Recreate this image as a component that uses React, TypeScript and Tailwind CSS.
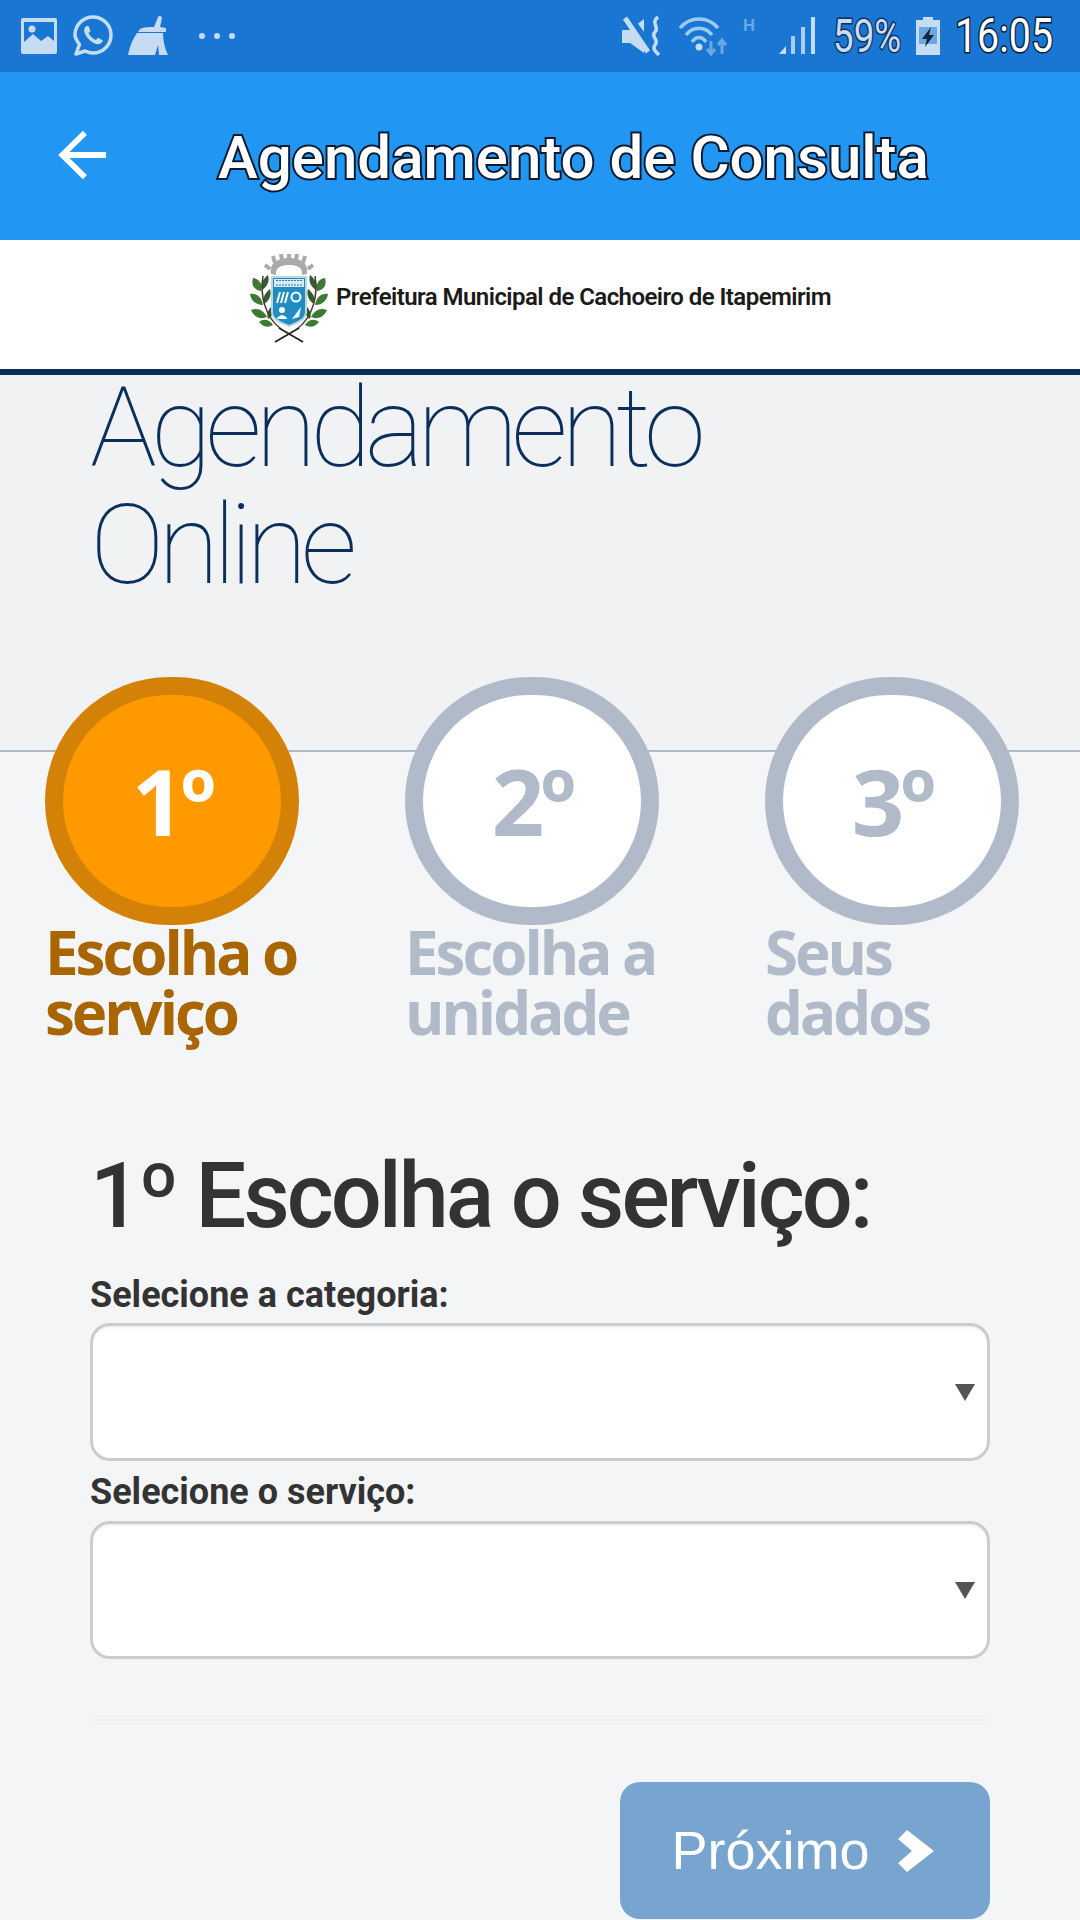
import React from "react";

const steps = [
  { n: "1º", label: ["Escolha o", "serviço"], active: true },
  { n: "2º", label: ["Escolha a", "unidade"], active: false },
  { n: "3º", label: ["Seus", "dados"], active: false },
];

const PictureIcon = () => (
  <svg width="36" height="36" viewBox="0 0 36 36">
    <rect x="0" y="0" width="36" height="36" rx="2" fill="#c6dcf3" />
    <rect x="3" y="4" width="30" height="26" fill="#1976d2" />
    <path d="M3 32V24L12 16L20 23L27 18L33 23V32Z" fill="#c6dcf3" />
    <circle cx="11" cy="11" r="3.500" fill="#c6dcf3" />
  </svg>
);

const WhatsappIcon = () => (
  <svg width="40" height="42" viewBox="0 0 40 42" fill="none">
    <path d="M3 39L6.500 29.500C4.500 26.500 2 23.500 2 20C2 10 10 2 20 2C30 2 38 10 38 20C38 30 30 38 20 38C17 38 14.500 37.200 12 36Z" stroke="#c6dcf3" strokeWidth="3.500" strokeLinejoin="round" />
    <path d="M13 11C11 13 10.500 16 12 19C14.500 24 18.500 27.500 23 29C26.500 30 29 28 30 25.500L25 22.800L23 25C20 24 17 21 15.500 18L17.500 16L15.500 11Z" fill="#c6dcf3" />
  </svg>
);

const BroomIcon = () => (
  <svg width="42" height="42" viewBox="0 0 42 42">
    <path d="M27 12L31 2C32 0 35 1 35 3L33 12L39 13L39 17L11 17L13 14C17 12 22 12 27 12Z" fill="#c6dcf3" />
    <path d="M10 18H36C36 26 38 34 41 40L32 40L31 30L28 40H1C3 30 6 24 10 18Z" fill="#c6dcf3" />
  </svg>
);

const MuteIcon = () => (
  <svg width="42" height="42" viewBox="0 0 42 42" fill="none">
    <path d="M0 15H8L22 4V38L8 28H0Z" fill="#c6dcf3" />
    <path d="M4 0L29 34" stroke="#1976d2" strokeWidth="9" />
    <path d="M3 3L26 37" stroke="#c6dcf3" strokeWidth="5" />
    <path d="M36 2C28 8 38 12 33 17C28 22 38 25 33 30C30 34 34 37 37 40" stroke="#c6dcf3" strokeWidth="3.500" />
  </svg>
);

const WifiIcon = () => (
  <svg width="50" height="42" viewBox="0 0 50 42" fill="none">
    <path d="M2 13C12 1 30 1 40 13" stroke="#9ccaf2" strokeWidth="3.500" />
    <path d="M8 20C15 11 27 11 34 20" stroke="#9ccaf2" strokeWidth="3.500" />
    <path d="M14 27C18 21 24 21 28 27" stroke="#9ccaf2" strokeWidth="3.500" />
    <circle cx="21" cy="32" r="3.500" fill="#c6dcf3" />
    <path d="M33 26V39M29 34L33 39L37 34" stroke="#6ba6e6" strokeWidth="3" />
    <path d="M44 39V26M40 30L44 25L48 30" stroke="#6ba6e6" strokeWidth="3" />
  </svg>
);

const SignalIcon = () => (
  <svg width="36" height="38" viewBox="0 0 36 38">
    <path d="M0 37L7 29V37Z" fill="#c6dcf3" />
    <rect x="12" y="19" width="4" height="18" fill="#a9cdf0" />
    <rect x="22" y="10" width="4" height="27" fill="#a9cdf0" />
    <rect x="32" y="0" width="4" height="37" fill="#c6dcf3" />
  </svg>
);

const BatteryIcon = () => (
  <svg width="24" height="38" viewBox="0 0 24 38">
    <path d="M7 0H17V3H24V38H0V3H7Z" fill="#c6dcf3" />
    <rect x="3" y="10" width="18" height="17" fill="#6ba6e6" />
    <path d="M15 10L6 22H11L9 30L18 18H13Z" fill="#13233a" />
  </svg>
);

// folhas do brasao, lado esquerdo; o direito e espelhado
const WreathSide = () => (
  <g>
    <path d="M4 24C11 25 14 31 12 37C5 36 2 31 4 24Z" fill="#3d7a36" />
    <path d="M19 21C21 27 18 33 13 36C11 30 14 25 19 21Z" fill="#2c5f2b" />
    <path d="M1 40C8 39 13 44 14 51C6 51 2 46 1 40Z" fill="#3d7a36" />
    <path d="M21 35C23 41 20 47 15 50C13 44 16 39 21 35Z" fill="#2c5f2b" />
    <path d="M2 56C9 53 15 57 18 63C11 66 5 63 2 56Z" fill="#3d7a36" />
    <path d="M25 50C26 56 24 62 19 65C17 59 20 54 25 50Z" fill="#2c5f2b" />
    <path d="M10 68C15 64 21 66 24 71C19 74 14 73 10 68Z" fill="#3d7a36" />
    <path d="M14 22C11 40 15 62 32 75" fill="none" stroke="#54352a" strokeWidth="1.500" />
  </g>
);

const Crest = () => (
  <svg width="80" height="90" viewBox="0 0 80 90" fill="none">
    <path d="M22 20C20 8 30 4 40 4C50 4 60 8 58 20L53 21C54 13 47 11 40 11C33 11 26 13 27 21Z" fill="#a8aaab" />
    <path d="M26 9L24 2M33 6L32 0M40 5V0M47 6L48 0M54 9L56 2M21 15L16 11M59 15L64 11" stroke="#a8aaab" strokeWidth="4" />
    <WreathSide />
    <g transform="matrix(-1 0 0 1 80 0)">
      <WreathSide />
    </g>
    <path d="M30 74L54 88M50 74L26 88" stroke="#2d2420" strokeWidth="2" />
    <path d="M23 23H57V58C57 66 47 69 40 72C33 69 23 66 23 58Z" fill="#1f8cc2" stroke="#bcd6e2" strokeWidth="2" />
    <rect x="25" y="25" width="30" height="8" fill="#dbe9ef" />
    <path d="M27 26.500H53M27 31H53" stroke="#2c7fa6" strokeWidth="1" strokeDasharray="2 1" />
    <path d="M31 38L28 49M35 38L32 49M39 38L36 49" stroke="#fff" strokeWidth="2" />
    <circle cx="47" cy="43" r="4.500" stroke="#fff" strokeWidth="2" />
    <circle cx="33" cy="56" r="3" fill="#fff" />
    <path d="M28 65C29 60 37 60 38 65Z" fill="#fff" />
    <path d="M43 65L52 53L50 63Z" fill="#fff" />
  </svg>
);

const Step = ({ n, label, active }: { n: string; label: string[]; active: boolean }) => (
  <div className="flex w-[254px] flex-col">
    <div
      className={
        active
          ? "flex h-[248px] w-[254px] items-center justify-center rounded-full border-[18px] border-[#d48207] bg-[#ff9900]"
          : "flex h-[248px] w-[254px] items-center justify-center rounded-full border-[18px] border-[#b0bac8] bg-white"
      }
    >
      <span
        className={
          active
            ? "font-['Open_Sans',sans-serif] text-[92px] leading-none font-bold tracking-[-4px] text-white"
            : "font-['Open_Sans',sans-serif] text-[92px] leading-none font-bold tracking-[-4px] text-[#b0bac8]"
        }
      >
        {n}
      </span>
    </div>
    <div
      className={
        active
          ? "mt-[-3px] font-['Open_Sans',sans-serif] text-[60px] leading-[60px] font-bold tracking-[-3px] whitespace-nowrap text-[#a86500]"
          : "mt-[-3px] font-['Open_Sans',sans-serif] text-[60px] leading-[60px] font-bold tracking-[-3px] whitespace-nowrap text-[#b0bac8]"
      }
    >
      {label[0]}
      <br />
      {label[1]}
    </div>
  </div>
);

const SelectBox = () => (
  <div className="flex h-[138px] items-center justify-end rounded-[20px] border-[3px] border-[#cccccc] bg-white pr-[12px] shadow-[inset_0_2px_2px_rgba(0,0,0,0.06)]">
    <div className="h-0 w-0 border-x-[10px] border-t-[17px] border-x-transparent border-t-[#555555]" />
  </div>
);

export default function App() {
  return (
    <div className="flex h-[1920px] w-[1080px] flex-col overflow-hidden bg-[#f3f5f7] font-['Roboto',sans-serif]">
      <div className="flex h-[72px] items-center justify-between bg-[#1976d2] pr-[27px] pl-[21px]">
        <div className="flex items-center">
          <PictureIcon />
          <div className="ml-[16px]"><WhatsappIcon /></div>
          <div className="ml-[14px]"><BroomIcon /></div>
          <div className="ml-[30px] flex gap-[9px]">
            <div className="h-[6px] w-[6px] rounded-full bg-[#c6dcf3]" />
            <div className="h-[6px] w-[6px] rounded-full bg-[#c6dcf3]" />
            <div className="h-[6px] w-[6px] rounded-full bg-[#c6dcf3]" />
          </div>
        </div>
        <div className="flex items-center">
          <MuteIcon />
          <div className="ml-[14px]"><WifiIcon /></div>
          <span className="mb-[22px] ml-[15px] w-[14px] text-[17px] leading-none font-bold text-[#6ba6e6]">H</span>
          <div className="ml-[22px]"><SignalIcon /></div>
          <span className="ml-[18px] w-[68px] origin-left scale-x-[0.8] text-[46px] leading-none whitespace-nowrap text-[#c6dcf3] [paint-order:stroke_fill] [-webkit-text-stroke:3px_#12305c]">59%</span>
          <div className="ml-[15px]"><BatteryIcon /></div>
          <span className="ml-[15px] w-[98px] origin-left scale-x-[0.82] text-[48px] leading-none whitespace-nowrap text-white [paint-order:stroke_fill] [-webkit-text-stroke:3px_#0b1a30]">16:05</span>
        </div>
      </div>

      <div className="flex h-[168px] items-center bg-[#2196f3] pl-[58px]">
        <svg className="mb-[2px]" width="50" height="52" viewBox="0 0 52 52" fill="none" stroke="white" strokeWidth="6">
          <path d="M50 26H4M28 3L4.500 26L28 49" />
        </svg>
        <span className="mt-[3px] ml-[110px] text-[60px] leading-none font-medium whitespace-nowrap text-white [paint-order:stroke_fill] [-webkit-text-stroke:4px_#0a1a30]">
          Agendamento de Consulta
        </span>
      </div>

      <div className="flex h-[129px] items-center justify-center bg-white pb-[11px]">
        <Crest />
        <span className="mb-[4px] ml-[7px] text-[24px] leading-none font-semibold tracking-[-0.550px] whitespace-nowrap text-[#1a1a1a]">
          Prefeitura Municipal de Cachoeiro de Itapemirim
        </span>
      </div>
      <div className="h-[6px] bg-[#0b2f5b]" />

      <div className="relative">
        <div className="absolute inset-x-0 top-0 h-[377px] bg-[#f0f2f4]" />
        <div className="absolute inset-x-0 top-[375px] h-[2px] bg-[#b0bac8]" />
        <h1 className="relative mt-[-6px] pl-[90px] text-[112px] leading-[117px] font-thin tracking-[-6.500px] text-[#0b2f5b]">
          Agendamento
          <br />
          Online
        </h1>
        <div className="relative mt-[74px] flex gap-[106px] pl-[45px]">
          {steps.map((s) => (
            <Step key={s.n} n={s.n} label={s.label} active={s.active} />
          ))}
        </div>
      </div>

      <div className="mt-[105px] px-[90px]">
        <h2 className="text-[90px] leading-[100px] font-medium tracking-[-3px] whitespace-nowrap text-[#333333]">
          1º Escolha o serviço:
        </h2>
        <label className="mt-[20px] block text-[36px] leading-[56px] font-bold text-[#333333]">Selecione a categoria:</label>
        <SelectBox />
        <label className="mt-[2px] block text-[36px] leading-[58px] font-bold text-[#333333]">Selecione o serviço:</label>
        <SelectBox />
        <div className="mt-[60px] h-[2px] bg-[#eeeeee]" />
        <div className="mt-[61px] flex justify-end">
          <div className="flex h-[137px] w-[370px] items-center justify-center gap-[28px] rounded-[20px] bg-[#78a5d0] pr-[5px] font-['Liberation_Sans',sans-serif] text-[54px] text-white">
            Próximo
            <svg width="36" height="42" viewBox="0 0 36 42" fill="white">
              <path d="M0 9L9 0L36 21L9 42L0 33L14 21Z" />
            </svg>
          </div>
        </div>
      </div>
    </div>
  );
}
